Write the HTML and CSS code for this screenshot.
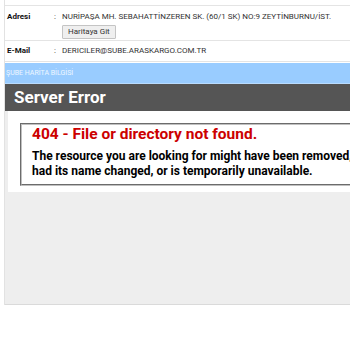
FILE: index.html
```html
<!DOCTYPE html>
<html lang="tr">
<head>
<meta charset="utf-8">
<title>Şube</title>
<link rel="stylesheet" href="styles.css">
</head>
<body>
<div class="panel">
  <div class="info">
    <div class="row row-addr">
      <div class="label">Adresi</div>
      <div class="colon">:</div>
      <div class="value">
        <div class="text">NURİPAŞA MH. SEBAHATTİNZEREN SK. (60/1 SK) NO:9 ZEYTİNBURNU/İST.</div>
        <button class="btn" type="button">Haritaya Git</button>
      </div>
    </div>
    <div class="row row-mail">
      <div class="label">E-Mail</div>
      <div class="colon">:</div>
      <div class="value"><div class="text">DERICILER@SUBE.ARASKARGO.COM.TR</div></div>
    </div>
  </div>
  <div class="map-bar">ŞUBE HARİTA BİLGİSİ</div>
  <div class="frame">
    <div class="err-header"><h1>Server Error</h1></div>
    <div class="err-content">
      <div class="container">
        <fieldset class="box">
          <h2>404 - File or directory not found.</h2>
          <h3>The resource you are looking for might have been removed, had its name changed, or is temporarily unavailable.</h3>
        </fieldset>
      </div>
    </div>
  </div>
</div>
</body>
</html>
```

FILE: styles.css
```css
html, body {
  margin: 0;
  padding: 0;
  background: #ffffff;
  overflow: hidden;
  width: 350px;
  height: 350px;
}

body {
  font-family: Roboto, "Liberation Sans", sans-serif;
  color: #222;
}

.panel {
  margin-left: 4px;
  width: 380px;
  padding-top: 5px;
  border-left: 1px solid #e2e2e2;
}

.info {
  border-top: 1px solid #e4e4e4;
}

.row {
  display: grid;
  grid-template-columns: 49px 8px 1fr;
  border-bottom: 1px solid #e4e4e4;
  font-size: 8px;
  line-height: 10px;
}

.row-addr {
  padding: 6px 0 1px;
}

.row-mail {
  padding: 5px 0 5px;
}

.label {
  font-weight: bold;
  padding-left: 2px;
  color: #111;
}

.colon {
  color: #333;
}

.value .text {
  color: #333;
  white-space: nowrap;
}

.btn {
  display: block;
  margin-top: 3px;
  height: 14px;
  padding: 0 5px;
  font-family: Roboto, "Liberation Sans", sans-serif;
  font-size: 8px;
  line-height: 12px;
  color: #333;
  background: #efefef;
  border: 1px solid #c4c4c4;
  border-radius: 1px;
}

.map-bar {
  margin-top: 1px;
  height: 20px;
  line-height: 21px;
  background: #99ccff;
  border-bottom: 1px solid #b9dcff;
  color: #eef7ff;
  font-size: 7px;
  padding-left: 1px;
}

.frame {
  height: 220px;
  background: #eeeeee;
  border-bottom: 1px solid #dadada;
  overflow: hidden;
}

.err-header {
  background: #555555;
  padding: 4px 9px;
}

.err-header h1 {
  margin: 0;
  font-size: 17px;
  line-height: 19px;
  font-weight: bold;
  color: #ffffff;
}

.err-content {
  margin-left: 3px;
}

.container {
  background: #ffffff;
  padding: 12px 12px 6px;
}

.box {
  margin: 0;
  padding: 0 10px 5px;
  border: 2px groove #c0c0c0;
  min-width: 0;
}

.box h2 {
  margin: 0;
  font-size: 15.5px;
  line-height: 19px;
  color: #cc0000;
  font-weight: bold;
}

.box h3 {
  margin: 5px 0 0;
  font-size: 12px;
  line-height: 15px;
  color: #000000;
  font-weight: bold;
  white-space: normal;
}
```
